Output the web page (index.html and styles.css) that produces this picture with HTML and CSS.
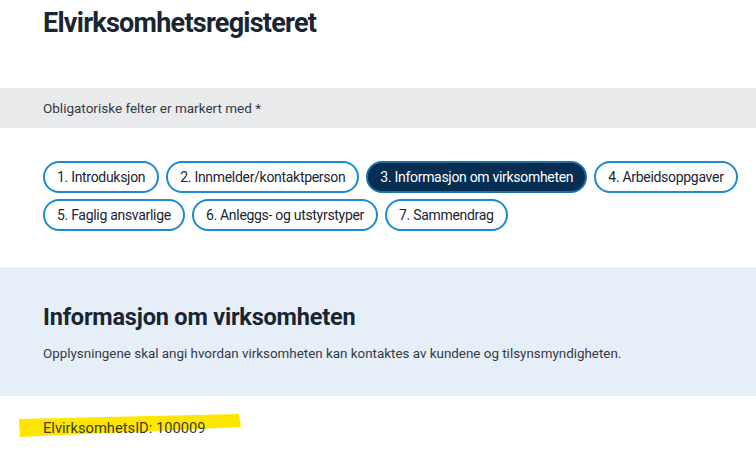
FILE: index.html
```html
<!DOCTYPE html>
<html lang="no">
<head>
<meta charset="utf-8">
<title>Elvirksomhetsregisteret</title>
<link rel="stylesheet" href="styles.css">
</head>
<body>
<header class="page-header">
  <h1 class="page-title">Elvirksomhetsregisteret</h1>
</header>
<div class="notice">
  <p class="notice-text">Obligatoriske felter er markert med *</p>
</div>
<nav class="steps">
  <a class="step">1. Introduksjon</a>
  <a class="step">2. Innmelder/kontaktperson</a>
  <a class="step step-active">3. Informasjon om virksomheten</a>
  <a class="step">4. Arbeidsoppgaver</a>
  <a class="step">5. Faglig ansvarlige</a>
  <a class="step">6. Anleggs- og utstyrstyper</a>
  <a class="step">7. Sammendrag</a>
</nav>
<section class="info">
  <h2 class="info-title">Informasjon om virksomheten</h2>
  <p class="info-text">Opplysningene skal angi hvordan virksomheten kan kontaktes av kundene og tilsynsmyndigheten.</p>
</section>
<div class="id-row">
  <svg class="highlight" width="226" height="26" viewBox="0 0 226 26" aria-hidden="true">
    <path d="M2 6 L222 1 L224 14 L3 24 Z" fill="#ffe600"/>
  </svg>
  <span class="id-text">ElvirksomhetsID: 100009</span>
</div>
</body>
</html>
```
FILE: styles.css
```css
* { box-sizing: border-box; }
html, body { margin: 0; padding: 0; background: #ffffff; }
body {
  font-family: Roboto, "Liberation Sans", sans-serif;
  color: #2c3440;
  width: 756px;
  height: 450px;
  overflow: hidden;
}
.page-header {
  padding: 5px 43px 0;
  height: 88px;
}
.page-title {
  margin: 0;
  font-size: 27px;
  line-height: 36px;
  font-weight: 700;
  letter-spacing: -0.75px;
  color: #1a2533;
}
.notice {
  background: #e9eaec;
  height: 40px;
  padding: 0 43px;
  display: flex;
  align-items: center;
}
.notice-text {
  margin: 0;
  font-size: 13.5px;
  color: #333a45;
}
.steps {
  display: flex;
  flex-wrap: wrap;
  gap: 6px 7px;
  padding: 33px 16px 0 43px;
  width: 756px;
}
.step {
  display: inline-flex;
  align-items: center;
  height: 32px;
  padding: 0 12px;
  border: 2px solid #1b8ad3;
  border-radius: 16px;
  font-size: 14px;
  letter-spacing: -0.3px;
  color: #1a2533;
  background: #ffffff;
  white-space: nowrap;
}
.step-active {
  background: #062e52;
  color: #ffffff;
  border-color: #1f6fa8;
}
.info {
  margin-top: 36px;
  background: #e6eef7;
  height: 129px;
  padding: 35px 43px 0;
}
.info-title {
  margin: 0;
  font-size: 23.5px;
  line-height: 30px;
  font-weight: 700;
  letter-spacing: -0.2px;
  color: #1a2533;
}
.info-text {
  margin: 14px 0 0;
  font-size: 13.4px;
  color: #333a45;
}
.id-row {
  position: relative;
  padding: 22px 43px 0;
}
.highlight {
  position: absolute;
  left: 17px;
  top: 17px;
}
.id-text {
  position: relative;
  font-size: 14.7px;
  color: #3a3a20;
}
```
